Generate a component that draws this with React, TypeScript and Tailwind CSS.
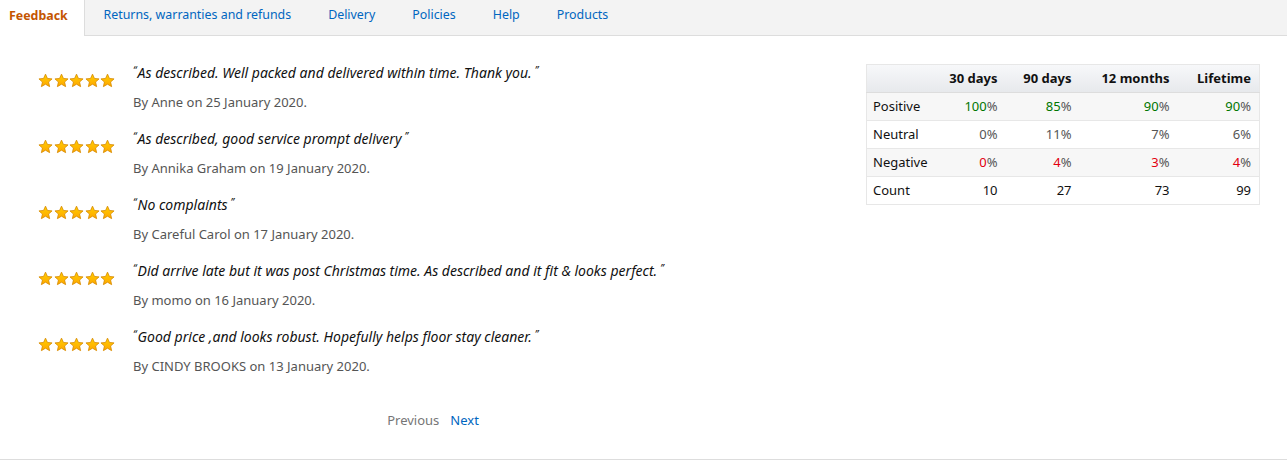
import React from 'react';

const tabs = ['Returns, warranties and refunds', 'Delivery', 'Policies', 'Help', 'Products'];

const reviews = [
  { text: 'As described. Well packed and delivered within time. Thank you.', by: 'Anne', date: '25 January 2020' },
  { text: 'As described, good service prompt delivery', by: 'Annika Graham', date: '19 January 2020' },
  { text: 'No complaints', by: 'Careful Carol', date: '17 January 2020' },
  { text: 'Did arrive late but it was post Christmas time. As described and it fit & looks perfect.', by: 'momo', date: '16 January 2020' },
  { text: 'Good price ,and looks robust. Hopefully helps floor stay cleaner.', by: 'CINDY BROOKS', date: '13 January 2020' },
];

const Star = () => (
  <svg width="15" height="15" viewBox="0 0 24 24">
    <defs>
      <linearGradient id="sg" x1="0" y1="0" x2="0" y2="1">
        <stop offset="0%" stopColor="#ffce00" />
        <stop offset="100%" stopColor="#ffa700" />
      </linearGradient>
    </defs>
    <path
      d="M12 1.8l3.1 6.9 7.4.7-5.6 5 1.7 7.4L12 17.9l-6.6 3.9 1.7-7.4-5.6-5 7.4-.7z"
      fill="url(#sg)"
      stroke="#d68a00"
      strokeWidth="1.3"
      strokeLinejoin="round"
    />
  </svg>
);

const Stars = () => (
  <div className="flex gap-[0.5px]">
    {[0, 1, 2, 3, 4].map((i) => (
      <Star key={i} />
    ))}
  </div>
);

// value cell: coloured digits, grey percent sign
const Pct = ({ v, tone }: { v: string; tone: 'green' | 'red' | 'grey' }) => {
  const c = tone === 'green' ? 'text-[#007600]' : tone === 'red' ? 'text-[#e3000f]' : 'text-[#555]';
  return (
    <span>
      <span className={c}>{v}</span>
      <span className="text-[#555]">%</span>
    </span>
  );
};

const rows = [
  { label: 'Positive', vals: ['100', '85', '90', '90'], tone: 'green' as const, bg: 'bg-[#f7f7f7]' },
  { label: 'Neutral', vals: ['0', '11', '7', '6'], tone: 'grey' as const, bg: 'bg-white' },
  { label: 'Negative', vals: ['0', '4', '3', '4'], tone: 'red' as const, bg: 'bg-[#f7f7f7]' },
];

export default function App() {
  return (
    <div className="w-[1287px] h-[468px] bg-white text-[13px] text-[#111] font-['Noto_Sans',sans-serif] flex flex-col">
      {/* Tab bar */}
      <div className="h-[36px] flex bg-[#f3f3f3] border-b border-[#dddddd] shrink-0 text-[12.4px]">
        <div className="w-[85px] pl-[9px] pb-[4px] flex items-center bg-white border-r border-[#dddddd] -mb-px font-bold text-[#c45500]">
          Feedback
        </div>
        <div className="flex">
          {tabs.map((t) => (
            <div key={t} className="px-[18.5px] pb-[4px] flex items-center text-[#0066c0]">
              {t}
            </div>
          ))}
        </div>
      </div>

      <div className="flex flex-1">
        {/* Reviews */}
        <div className="w-[866px] flex flex-col">
          <div className="flex flex-col gap-[17px] pt-[27px] pl-[38px]">
            {reviews.map((r) => (
              <div key={r.by} className="flex">
                <div className="w-[95px] pt-[10px] shrink-0">
                  <Stars />
                </div>
                <div className="flex flex-col gap-[9px]">
                  <div className="italic text-[14px] h-[20px] leading-[20px]">
                    <span className="text-[10px] leading-[0] relative -top-[4px] mr-[1px]">“</span>
                    {r.text}
                    <span className="text-[10px] leading-[0] relative -top-[4px] ml-[3px]">”</span>
                  </div>
                  <div className="text-[#555] h-[20px] leading-[20px]">
                    By {r.by} on {r.date}.
                  </div>
                </div>
              </div>
            ))}
          </div>
          <div className="flex justify-center gap-[11px] pt-[34px] leading-[20px]">
            <span className="text-[#767676]">Previous</span>
            <span className="text-[#0066c0]">Next</span>
          </div>
        </div>

        {/* Stats table */}
        <div className="pt-[28px]">
          <table className="w-[394px] border-collapse border border-[#e7e7e7]">
            <thead>
              <tr className="h-[28px] bg-gradient-to-b from-[#f7f8fa] to-[#e7e9ec] border-b border-[#dddddd]">
                <th className="w-[70px]"></th>
                <th className="text-right font-bold pr-[1px] w-[62px]">30 days</th>
                <th className="text-right font-bold pr-[1px] w-[74px]">90 days</th>
                <th className="text-right font-bold pr-[1px] w-[98px]">12 months</th>
                <th className="text-right font-bold pr-[8px]">Lifetime</th>
              </tr>
            </thead>
            <tbody>
              {rows.map((row) => (
                <tr key={row.label} className={`h-[28px] border-b border-[#e7e7e7] ${row.bg}`}>
                  <td className="pl-[6px]">{row.label}</td>
                  {row.vals.map((v, i) => (
                    <td key={i} className={`text-right ${i === 3 ? 'pr-[8px]' : 'pr-[1px]'}`}>
                      <Pct v={v} tone={row.tone} />
                    </td>
                  ))}
                </tr>
              ))}
              <tr className="h-[28px] bg-white">
                <td className="pl-[6px]">Count</td>
                <td className="text-right pr-[1px]">10</td>
                <td className="text-right pr-[1px]">27</td>
                <td className="text-right pr-[1px]">73</td>
                <td className="text-right pr-[8px]">99</td>
              </tr>
            </tbody>
          </table>
        </div>
      </div>

      <div className="h-[9px] border-t border-[#dddddd] shrink-0" />
    </div>
  );
}
